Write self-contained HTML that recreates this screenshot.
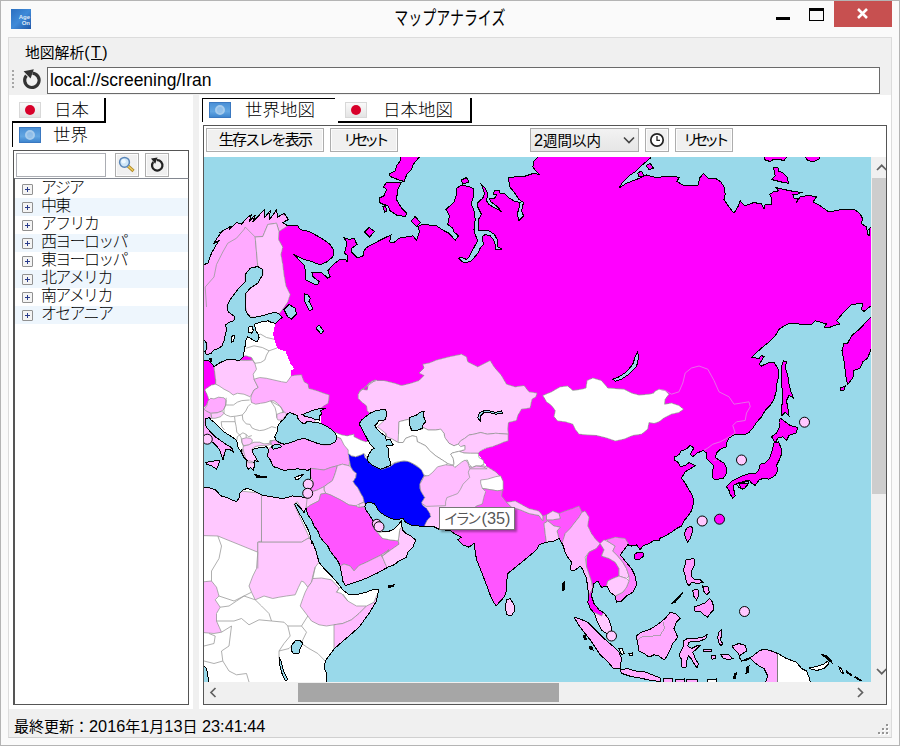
<!DOCTYPE html>
<html lang="ja"><head><meta charset="utf-8"><title>マップアナライズ</title>
<style>
*{box-sizing:border-box;margin:0;padding:0}
html,body{width:900px;height:746px;overflow:hidden;background:#fafafa}
body{position:relative;font-family:"Liberation Sans","Noto Sans CJK JP",sans-serif;font-size:14px;color:#000}
.abs{position:absolute}
#win{left:0;top:0;width:900px;height:746px;border:1px solid #b4b4b4;background:#fafafa}
#client{left:8px;top:37px;width:884px;height:701px;background:#f0f0f0;border:1px solid #dcdcdc;border-bottom-color:#d0d0d0}
#title{left:350px;top:6px;width:200px;text-align:center;font-size:19px;line-height:26px;color:#000;transform:scaleX(.735);transform-origin:99.5px 0}
.btn{border:1px solid #adadad;background:#f0f0f0;box-shadow:inset 0 0 0 1px #fcfcfc;text-align:center;white-space:nowrap;overflow:hidden}
.white{background:#fff}
.L{font-size:16.3px}
.ln{background:#000}
.tree div{position:absolute;left:0;width:173px;height:18px}
.tree .alt{background:#eef6fd}
.tree span{font-weight:300;position:absolute;left:26px;top:-2px;font-size:16px;line-height:20px;white-space:nowrap;letter-spacing:-1.7px}
.tree i{position:absolute;left:7px;top:4px;width:11px;height:11px;border:1px solid #919191;border-radius:1px;background:#f4f4f4}
.tree i:before{content:"";position:absolute;left:2px;top:4px;width:5px;height:1px;background:#2a3c8c}
.tree i:after{content:"";position:absolute;left:4px;top:2px;width:1px;height:5px;background:#2a3c8c}
</style></head><body>
<div id="win" class="abs"></div>
<div class="abs" style="left:11px;top:9px;width:20px;height:20px;background:linear-gradient(135deg,#2a6fc0,#3f8ad8 50%,#1f57a8);color:#dfeaf8;font-size:6px;line-height:6px;text-align:right;padding:5px 1px 0 0;font-weight:bold">Age<br>On</div>
<div id="title" class="abs">マップアナライズ</div>
<!-- caption buttons -->
<div class="abs ln" style="left:776px;top:17px;width:14px;height:3px"></div>
<div class="abs" style="left:809px;top:8px;width:15px;height:13px;border:1px solid #000;border-top-width:3px"></div>
<div class="abs" style="left:834px;top:1px;width:58px;height:26px;background:#c75050"></div>
<svg class="abs" style="left:834px;top:1px" width="58" height="26"><path d="M24 8 L33 17 M33 8 L24 17" stroke="#fff" stroke-width="2.6" fill="none"/></svg>
<div id="client" class="abs"></div>
<!-- menu -->
<div class="abs" style="left:25px;top:43px;font-size:14.8px;line-height:20px;white-space:nowrap">地図解析<span style="font-size:16px;letter-spacing:1.5px">(<u>T</u>)</span></div>
<!-- toolbar -->
<div class="abs" style="left:12px;top:70px;width:2px;height:18px;background:repeating-linear-gradient(#a6a6a6 0 2px,transparent 2px 4px)"></div>
<svg class="abs" style="left:21px;top:67px" width="22" height="25" viewBox="0 0 22 25"><path d="M5.4 8.6 A7.2 7.2 0 1 0 11.5 6.1" fill="none" stroke="#333" stroke-width="3.2"/><path d="M2.6 4.2 L12.8 2.2 L9.6 11.6 Z" fill="#333"/></svg>
<div class="abs white" style="left:47px;top:67px;width:833px;height:27px;border:1px solid #6a6a6a"></div>
<div class="abs" style="left:50px;top:69px;font-size:17.5px;line-height:22px;white-space:nowrap">local://screening/Iran</div>
<!-- white work area -->
<div class="abs white" style="left:9px;top:95px;width:184px;height:614px"></div>
<div class="abs white" style="left:199px;top:95px;width:692px;height:614px"></div>

<!-- left tabs -->
<div class="abs ln" style="left:104px;top:98px;width:2px;height:25px"></div>
<div class="abs ln" style="left:12px;top:121px;width:94px;height:2px"></div>
<div class="abs ln" style="left:12px;top:122px;width:1px;height:25px"></div>
<div class="abs" style="left:19px;top:102px;width:22px;height:16px;background:linear-gradient(#fafafa,#e4e4e4);border:1px solid #d8d8d8"><div class="abs" style="left:5px;top:2px;width:10px;height:10px;border-radius:5px;background:#d8002a"></div></div>
<div class="abs" style="left:54px;top:98px;font-size:17.5px;line-height:24px;white-space:nowrap;font-weight:300">日本</div>
<div class="abs" style="left:19px;top:127px;width:22px;height:16px;background:linear-gradient(#4a90d6,#62a6e2 60%,#3f86cf);border:1px solid #3a78c0"><div class="abs" style="left:5px;top:2px;width:10px;height:10px;border-radius:5px;border:2px solid #b4d4f0;background:rgba(255,255,255,.38);opacity:.85"></div></div>
<div class="abs" style="left:53px;top:123px;font-size:17.5px;line-height:24px;white-space:nowrap;font-weight:300">世界</div>
<!-- left panel -->
<div class="abs" style="left:13px;top:150px;width:176px;height:555px;border:1px solid #555"></div>
<div class="abs white" style="left:16px;top:153px;width:90px;height:24px;border:1px solid #abadb3"></div>
<div class="abs btn" style="left:115px;top:153px;width:24px;height:24px"></div>
<svg class="abs" style="left:115px;top:153px" width="24" height="24" viewBox="0 0 24 24"><line x1="13" y1="13" x2="18.5" y2="18" stroke="#b08a28" stroke-width="3.2"/><line x1="13" y1="13" x2="18" y2="17.6" stroke="#f2d060" stroke-width="1.4"/><circle cx="9.5" cy="9.3" r="4.9" fill="#cfe6f7" stroke="#5a86b8" stroke-width="1.5"/><circle cx="8.6" cy="8.2" r="2.2" fill="#eef8ff"/></svg>
<div class="abs btn" style="left:145px;top:153px;width:24px;height:24px"></div>
<svg class="abs" style="left:145px;top:153px" width="24" height="24" viewBox="0 0 24 24"><path d="M8.3 9.0 A5.2 5.2 0 1 0 12 7.2" fill="none" stroke="#222" stroke-width="2.2"/><path d="M6 5.6 L12.6 4.4 L10.2 10.8 Z" fill="#222"/></svg>
<div class="abs white tree" style="left:14px;top:178px;width:175px;height:527px;border:1px solid #555;border-top-color:#828790">
<div style="top:1px"><i></i><span>アジア</span></div>
<div class="alt" style="top:19px"><i></i><span>中東</span></div>
<div style="top:37px"><i></i><span>アフリカ</span></div>
<div class="alt" style="top:55px"><i></i><span>西ヨーロッパ</span></div>
<div style="top:73px"><i></i><span>東ヨーロッパ</span></div>
<div class="alt" style="top:91px"><i></i><span>北アメリカ</span></div>
<div style="top:109px"><i></i><span>南アメリカ</span></div>
<div class="alt" style="top:127px"><i></i><span>オセアニア</span></div>
</div>

<!-- right tabs -->
<div class="abs ln" style="left:202px;top:98px;width:1px;height:24px"></div>
<div class="abs ln" style="left:202px;top:98px;width:133px;height:1px"></div>
<div class="abs" style="left:209px;top:102px;width:22px;height:16px;background:linear-gradient(#4a90d6,#62a6e2 60%,#3f86cf);border:1px solid #3a78c0"><div class="abs" style="left:5px;top:2px;width:10px;height:10px;border-radius:5px;border:2px solid #b4d4f0;background:rgba(255,255,255,.38);opacity:.85"></div></div>
<div class="abs" style="left:245px;top:98px;font-size:17.5px;line-height:24px;white-space:nowrap;font-weight:300">世界地図</div>
<div class="abs ln" style="left:338px;top:121px;width:134px;height:2px"></div>
<div class="abs ln" style="left:470px;top:98px;width:2px;height:25px"></div>
<div class="abs" style="left:345px;top:102px;width:22px;height:16px;background:linear-gradient(#fafafa,#e4e4e4);border:1px solid #d8d8d8"><div class="abs" style="left:5px;top:2px;width:10px;height:10px;border-radius:5px;background:#d8002a"></div></div>
<div class="abs" style="left:383px;top:98px;font-size:17.5px;line-height:24px;white-space:nowrap;font-weight:300">日本地図</div>
<!-- right panel -->
<div class="abs" style="left:203px;top:125px;width:684px;height:580px;border:1px solid #555"></div>
<div class="abs btn" style="left:206px;top:128px;width:118px;height:24px;font-size:15px;line-height:22px;letter-spacing:-1.8px">生存スレを表示</div>
<div class="abs btn" style="left:330px;top:128px;width:68px;height:24px;font-size:15px;line-height:22px;letter-spacing:-4.6px">リセット</div>
<div class="abs" style="left:530px;top:128px;width:109px;height:24px;border:1px solid #acacac;background:linear-gradient(#f2f2f2,#e6e6e6);font-size:14.5px;line-height:22px;padding-left:3px;white-space:nowrap"><span class="L">2</span>週間以内</div>
<svg class="abs" style="left:622px;top:135px" width="14" height="10"><path d="M2 2.5 L7 7.5 L12 2.5" fill="none" stroke="#444" stroke-width="1.6"/></svg>
<div class="abs btn" style="left:645px;top:128px;width:24px;height:24px"></div>
<svg class="abs" style="left:645px;top:128px" width="24" height="24"><circle cx="12" cy="12" r="6.2" fill="#fff" stroke="#222" stroke-width="1.7"/><path d="M12 8 V12.3 H15" fill="none" stroke="#222" stroke-width="1.3"/></svg>
<div class="abs btn" style="left:675px;top:128px;width:58px;height:24px;font-size:15px;line-height:22px;letter-spacing:-4.6px">リセット</div>

<svg class="abs" style="left:204px;top:157px" width="667" height="525" viewBox="204 157 667 525" shape-rendering="crispEdges">
<defs><clipPath id="land"><polygon points="199.0,264.5 204.0,264.5 207.8,263.2 211.5,253.2 216.5,244.5 219.0,240.8 214.0,243.2 217.8,237.0 222.8,230.8 219.0,233.2 225.2,229.5 231.5,225.8 229.0,229.5 236.5,222.5 241.5,224.0 247.8,217.0 251.5,215.0 249.0,221.5 255.2,215.0 252.8,222.0 264.0,210.0 264.0,218.2 270.2,210.8 269.5,219.5 276.5,210.0 277.8,217.0 284.0,213.2 288.5,219.5 282.8,222.5 287.8,225.8 297.8,225.8 300.2,229.5 309.0,231.5 321.5,238.2 330.2,244.5 334.0,250.8 332.8,257.0 326.5,262.0 320.2,265.0 311.5,261.5 302.8,259.0 297.8,256.5 293.5,254.0 304.0,265.0 306.0,272.0 305.2,279.5 314.0,284.0 317.8,284.5 319.0,281.5 312.8,276.5 312.0,272.5 321.5,272.5 327.8,278.2 330.2,276.5 327.8,270.8 332.8,265.0 339.0,260.0 345.2,259.0 347.0,262.0 347.8,255.8 344.5,253.2 347.0,243.2 344.0,237.5 349.0,239.5 354.0,238.2 357.0,244.5 352.0,248.2 351.5,252.0 357.0,257.5 362.8,256.5 364.0,250.8 366.5,247.5 379.0,240.8 384.0,238.2 391.0,235.0 389.5,242.0 394.0,242.5 399.0,238.2 412.8,235.8 416.5,240.2 419.5,232.0 417.8,226.5 422.8,224.0 429.0,225.0 436.5,225.8 444.0,230.8 449.0,233.2 455.2,240.2 458.5,235.8 454.0,232.0 452.8,228.2 447.8,224.5 449.5,215.8 446.0,209.5 454.0,202.0 456.0,195.8 457.0,188.2 461.0,185.0 469.0,186.5 474.0,189.0 473.5,197.0 471.0,203.2 474.0,210.8 475.2,219.5 474.0,229.5 475.2,234.5 477.8,240.8 472.8,249.5 469.0,257.0 466.5,259.5 461.0,257.0 458.5,258.2 462.8,262.0 467.0,262.5 471.5,260.8 477.8,253.2 480.2,248.2 483.5,244.5 482.0,237.0 485.2,234.5 490.2,235.8 493.5,239.5 495.2,244.5 496.0,250.0 501.5,249.0 497.8,247.0 497.8,240.8 494.5,234.5 489.0,230.8 482.8,230.0 479.0,230.8 478.5,219.5 481.5,214.5 477.8,207.0 477.0,203.2 482.8,198.2 484.5,193.2 481.5,185.0 485.2,188.2 487.8,193.2 486.5,200.8 489.0,204.5 495.2,208.2 501.5,211.5 496.5,205.8 491.0,202.0 489.0,198.2 494.5,198.2 497.0,195.0 493.5,194.5 494.5,190.0 499.5,190.0 500.2,194.0 504.0,193.2 509.5,198.2 515.2,201.5 520.2,202.5 518.5,210.8 517.0,213.2 519.0,220.8 523.5,215.8 521.5,210.8 523.5,202.5 519.0,199.5 514.0,192.0 509.5,186.5 508.5,177.5 514.0,177.0 524.0,176.5 534.0,173.2 539.0,174.5 532.8,167.0 534.0,160.8 537.8,157.0 537.8,152.0 650.2,152.0 650.2,158.2 642.8,164.5 636.5,170.8 629.0,175.8 622.8,182.0 619.0,188.2 626.5,183.2 636.5,179.5 646.5,175.0 654.0,177.0 656.5,177.5 665.2,176.5 672.8,176.0 679.0,177.5 677.0,181.5 682.8,185.0 691.5,185.2 698.5,185.0 699.5,178.2 703.5,173.5 708.5,178.2 716.5,179.0 721.0,182.0 724.0,187.0 725.2,194.5 724.0,199.5 729.0,207.0 734.0,213.2 737.8,207.0 740.2,200.8 744.5,205.8 754.0,202.5 761.5,204.0 764.0,209.0 765.2,204.5 771.5,204.5 772.0,198.2 769.5,194.5 774.0,191.5 779.0,190.8 776.0,187.5 784.0,189.5 794.0,191.5 801.5,192.5 797.8,194.0 792.8,194.5 794.0,198.2 798.5,198.2 796.5,202.5 800.2,197.0 809.0,195.2 816.5,197.0 812.8,202.0 819.0,205.0 829.0,212.0 839.0,210.0 854.0,209.0 860.2,214.0 862.8,219.0 861.0,223.2 866.5,227.0 867.8,234.5 869.5,235.8 869.0,229.5 871.0,227.0 879.0,227.0 879.0,305.8 871.0,305.8 864.0,311.5 861.5,309.5 862.8,303.2 851.5,304.5 844.0,312.0 836.5,320.8 840.2,324.0 837.8,324.5 829.0,327.5 824.0,327.0 826.5,324.0 821.5,322.5 815.2,320.8 811.5,324.5 804.0,325.0 799.0,324.0 790.2,323.2 784.0,325.8 779.0,329.5 775.2,335.8 767.8,343.0 761.5,348.0 754.0,355.0 752.0,357.5 759.0,358.5 761.5,355.5 764.0,356.8 762.0,360.0 759.0,364.2 761.5,366.0 767.8,363.0 774.0,362.5 777.8,368.0 779.0,375.5 777.0,383.0 776.0,391.8 774.0,399.2 770.2,405.5 765.2,410.5 761.5,416.8 756.5,422.5 752.8,428.0 749.0,432.5 744.0,435.0 739.0,434.2 734.0,435.0 729.0,438.0 726.5,443.0 726.5,446.8 720.2,449.2 716.5,453.0 715.2,457.5 719.5,460.5 724.0,463.0 726.5,468.0 726.0,474.2 723.5,478.0 715.2,480.0 712.8,478.0 712.8,470.5 713.5,465.5 709.5,461.8 706.0,458.0 706.5,453.0 703.5,450.5 697.0,453.0 692.8,456.8 690.2,454.2 694.0,448.0 690.2,445.5 686.0,449.2 681.0,451.0 678.5,455.5 674.5,456.8 674.0,460.0 678.5,462.5 680.2,466.8 685.2,465.5 689.0,462.5 695.2,465.5 691.5,468.0 685.2,471.8 681.5,478.0 685.2,483.0 687.8,488.0 691.0,493.0 692.8,496.0 693.5,503.5 691.5,511.0 687.8,516.0 684.0,521.0 681.5,526.0 676.5,528.5 671.5,532.2 665.2,536.0 660.2,538.0 659.0,541.0 654.0,540.5 649.0,543.5 642.8,546.0 640.2,549.8 636.5,544.8 631.5,546.0 627.8,544.8 624.0,549.8 620.2,554.8 625.2,561.0 631.5,568.5 635.2,576.0 636.5,584.8 632.8,592.2 626.5,596.0 621.5,601.0 616.5,602.2 615.2,596.0 610.2,592.2 607.0,586.5 601.5,587.2 597.8,581.0 594.0,583.5 592.8,588.5 591.5,596.0 594.0,603.5 599.0,609.8 604.0,613.0 608.5,618.5 611.0,626.0 612.2,633.0 607.8,634.2 602.0,630.5 597.5,622.2 594.5,613.5 590.2,608.5 587.8,602.2 589.0,594.8 587.8,588.5 586.5,578.5 582.8,569.8 580.2,566.0 574.0,571.0 570.2,569.8 571.5,562.2 567.8,557.2 565.2,552.2 562.8,544.8 559.0,538.5 554.0,541.0 546.5,542.2 539.0,544.8 536.5,549.8 527.8,557.2 520.2,563.5 514.0,568.5 507.8,573.5 506.5,582.2 506.0,592.2 504.0,597.2 496.0,606.0 491.5,598.5 487.8,588.5 484.0,578.5 480.2,568.5 476.5,559.8 475.2,551.0 474.0,543.5 469.0,547.2 462.8,544.8 457.8,539.8 461.5,537.2 454.0,533.5 450.7,530.8 439.0,529.2 434.0,526.7 424.0,526.7 417.3,525.8 410.7,525.0 405.7,522.5 402.7,518.0 399.8,519.2 395.7,520.0 390.7,518.3 385.7,515.8 381.5,513.3 378.2,510.0 375.7,505.8 374.0,503.3 369.8,502.5 365.7,503.3 364.8,506.7 366.5,510.8 369.0,514.2 371.5,518.3 374.8,523.3 378.2,528.3 382.3,531.3 385.7,531.7 390.7,530.8 394.0,529.2 398.2,525.0 401.3,521.0 402.3,530.0 405.7,533.3 410.7,535.8 415.7,540.0 412.8,547.2 407.8,552.2 406.5,557.2 399.0,561.0 394.0,564.8 387.8,567.2 379.0,572.2 369.0,577.2 359.0,581.0 350.2,584.0 345.2,585.5 342.8,581.0 341.5,573.5 340.2,566.0 337.8,561.0 334.0,556.0 330.2,551.0 327.8,546.0 324.0,542.2 320.2,537.2 317.8,531.0 314.0,526.0 311.5,519.8 307.8,514.8 306.0,509.0 306.0,508.3 304.0,512.5 301.5,509.2 299.0,506.7 296.5,503.3 294.8,504.2 296.5,508.3 299.0,513.3 302.3,518.3 305.7,525.0 308.2,530.0 310.7,536.7 311.5,544.0 312.0,541.0 316.0,551.0 319.0,562.2 324.0,568.5 331.5,576.0 339.0,584.8 342.8,589.8 349.0,594.8 359.0,594.0 366.5,592.2 374.0,589.0 378.5,590.0 376.5,601.0 369.0,613.5 359.0,627.2 349.0,636.0 340.2,643.5 334.0,649.0 329.0,656.0 325.2,661.0 324.5,668.5 326.5,673.5 326.5,682.0 326.5,696.0 194.0,696.0"/></clipPath></defs>
<rect x="204" y="157" width="667" height="525" fill="#99d9ea"/>
<polygon points="199.0,264.5 204.0,264.5 207.8,263.2 211.5,253.2 216.5,244.5 219.0,240.8 214.0,243.2 217.8,237.0 222.8,230.8 219.0,233.2 225.2,229.5 231.5,225.8 229.0,229.5 236.5,222.5 241.5,224.0 247.8,217.0 251.5,215.0 249.0,221.5 255.2,215.0 252.8,222.0 264.0,210.0 264.0,218.2 270.2,210.8 269.5,219.5 276.5,210.0 277.8,217.0 284.0,213.2 288.5,219.5 282.8,222.5 287.8,225.8 297.8,225.8 300.2,229.5 309.0,231.5 321.5,238.2 330.2,244.5 334.0,250.8 332.8,257.0 326.5,262.0 320.2,265.0 311.5,261.5 302.8,259.0 297.8,256.5 293.5,254.0 304.0,265.0 306.0,272.0 305.2,279.5 314.0,284.0 317.8,284.5 319.0,281.5 312.8,276.5 312.0,272.5 321.5,272.5 327.8,278.2 330.2,276.5 327.8,270.8 332.8,265.0 339.0,260.0 345.2,259.0 347.0,262.0 347.8,255.8 344.5,253.2 347.0,243.2 344.0,237.5 349.0,239.5 354.0,238.2 357.0,244.5 352.0,248.2 351.5,252.0 357.0,257.5 362.8,256.5 364.0,250.8 366.5,247.5 379.0,240.8 384.0,238.2 391.0,235.0 389.5,242.0 394.0,242.5 399.0,238.2 412.8,235.8 416.5,240.2 419.5,232.0 417.8,226.5 422.8,224.0 429.0,225.0 436.5,225.8 444.0,230.8 449.0,233.2 455.2,240.2 458.5,235.8 454.0,232.0 452.8,228.2 447.8,224.5 449.5,215.8 446.0,209.5 454.0,202.0 456.0,195.8 457.0,188.2 461.0,185.0 469.0,186.5 474.0,189.0 473.5,197.0 471.0,203.2 474.0,210.8 475.2,219.5 474.0,229.5 475.2,234.5 477.8,240.8 472.8,249.5 469.0,257.0 466.5,259.5 461.0,257.0 458.5,258.2 462.8,262.0 467.0,262.5 471.5,260.8 477.8,253.2 480.2,248.2 483.5,244.5 482.0,237.0 485.2,234.5 490.2,235.8 493.5,239.5 495.2,244.5 496.0,250.0 501.5,249.0 497.8,247.0 497.8,240.8 494.5,234.5 489.0,230.8 482.8,230.0 479.0,230.8 478.5,219.5 481.5,214.5 477.8,207.0 477.0,203.2 482.8,198.2 484.5,193.2 481.5,185.0 485.2,188.2 487.8,193.2 486.5,200.8 489.0,204.5 495.2,208.2 501.5,211.5 496.5,205.8 491.0,202.0 489.0,198.2 494.5,198.2 497.0,195.0 493.5,194.5 494.5,190.0 499.5,190.0 500.2,194.0 504.0,193.2 509.5,198.2 515.2,201.5 520.2,202.5 518.5,210.8 517.0,213.2 519.0,220.8 523.5,215.8 521.5,210.8 523.5,202.5 519.0,199.5 514.0,192.0 509.5,186.5 508.5,177.5 514.0,177.0 524.0,176.5 534.0,173.2 539.0,174.5 532.8,167.0 534.0,160.8 537.8,157.0 537.8,152.0 650.2,152.0 650.2,158.2 642.8,164.5 636.5,170.8 629.0,175.8 622.8,182.0 619.0,188.2 626.5,183.2 636.5,179.5 646.5,175.0 654.0,177.0 656.5,177.5 665.2,176.5 672.8,176.0 679.0,177.5 677.0,181.5 682.8,185.0 691.5,185.2 698.5,185.0 699.5,178.2 703.5,173.5 708.5,178.2 716.5,179.0 721.0,182.0 724.0,187.0 725.2,194.5 724.0,199.5 729.0,207.0 734.0,213.2 737.8,207.0 740.2,200.8 744.5,205.8 754.0,202.5 761.5,204.0 764.0,209.0 765.2,204.5 771.5,204.5 772.0,198.2 769.5,194.5 774.0,191.5 779.0,190.8 776.0,187.5 784.0,189.5 794.0,191.5 801.5,192.5 797.8,194.0 792.8,194.5 794.0,198.2 798.5,198.2 796.5,202.5 800.2,197.0 809.0,195.2 816.5,197.0 812.8,202.0 819.0,205.0 829.0,212.0 839.0,210.0 854.0,209.0 860.2,214.0 862.8,219.0 861.0,223.2 866.5,227.0 867.8,234.5 869.5,235.8 869.0,229.5 871.0,227.0 879.0,227.0 879.0,305.8 871.0,305.8 864.0,311.5 861.5,309.5 862.8,303.2 851.5,304.5 844.0,312.0 836.5,320.8 840.2,324.0 837.8,324.5 829.0,327.5 824.0,327.0 826.5,324.0 821.5,322.5 815.2,320.8 811.5,324.5 804.0,325.0 799.0,324.0 790.2,323.2 784.0,325.8 779.0,329.5 775.2,335.8 767.8,343.0 761.5,348.0 754.0,355.0 752.0,357.5 759.0,358.5 761.5,355.5 764.0,356.8 762.0,360.0 759.0,364.2 761.5,366.0 767.8,363.0 774.0,362.5 777.8,368.0 779.0,375.5 777.0,383.0 776.0,391.8 774.0,399.2 770.2,405.5 765.2,410.5 761.5,416.8 756.5,422.5 752.8,428.0 749.0,432.5 744.0,435.0 739.0,434.2 734.0,435.0 729.0,438.0 726.5,443.0 726.5,446.8 720.2,449.2 716.5,453.0 715.2,457.5 719.5,460.5 724.0,463.0 726.5,468.0 726.0,474.2 723.5,478.0 715.2,480.0 712.8,478.0 712.8,470.5 713.5,465.5 709.5,461.8 706.0,458.0 706.5,453.0 703.5,450.5 697.0,453.0 692.8,456.8 690.2,454.2 694.0,448.0 690.2,445.5 686.0,449.2 681.0,451.0 678.5,455.5 674.5,456.8 674.0,460.0 678.5,462.5 680.2,466.8 685.2,465.5 689.0,462.5 695.2,465.5 691.5,468.0 685.2,471.8 681.5,478.0 685.2,483.0 687.8,488.0 691.0,493.0 692.8,496.0 693.5,503.5 691.5,511.0 687.8,516.0 684.0,521.0 681.5,526.0 676.5,528.5 671.5,532.2 665.2,536.0 660.2,538.0 659.0,541.0 654.0,540.5 649.0,543.5 642.8,546.0 640.2,549.8 636.5,544.8 631.5,546.0 627.8,544.8 624.0,549.8 620.2,554.8 625.2,561.0 631.5,568.5 635.2,576.0 636.5,584.8 632.8,592.2 626.5,596.0 621.5,601.0 616.5,602.2 615.2,596.0 610.2,592.2 607.0,586.5 601.5,587.2 597.8,581.0 594.0,583.5 592.8,588.5 591.5,596.0 594.0,603.5 599.0,609.8 604.0,613.0 608.5,618.5 611.0,626.0 612.2,633.0 607.8,634.2 602.0,630.5 597.5,622.2 594.5,613.5 590.2,608.5 587.8,602.2 589.0,594.8 587.8,588.5 586.5,578.5 582.8,569.8 580.2,566.0 574.0,571.0 570.2,569.8 571.5,562.2 567.8,557.2 565.2,552.2 562.8,544.8 559.0,538.5 554.0,541.0 546.5,542.2 539.0,544.8 536.5,549.8 527.8,557.2 520.2,563.5 514.0,568.5 507.8,573.5 506.5,582.2 506.0,592.2 504.0,597.2 496.0,606.0 491.5,598.5 487.8,588.5 484.0,578.5 480.2,568.5 476.5,559.8 475.2,551.0 474.0,543.5 469.0,547.2 462.8,544.8 457.8,539.8 461.5,537.2 454.0,533.5 450.7,530.8 439.0,529.2 434.0,526.7 424.0,526.7 417.3,525.8 410.7,525.0 405.7,522.5 402.7,518.0 399.8,519.2 395.7,520.0 390.7,518.3 385.7,515.8 381.5,513.3 378.2,510.0 375.7,505.8 374.0,503.3 369.8,502.5 365.7,503.3 364.8,506.7 366.5,510.8 369.0,514.2 371.5,518.3 374.8,523.3 378.2,528.3 382.3,531.3 385.7,531.7 390.7,530.8 394.0,529.2 398.2,525.0 401.3,521.0 402.3,530.0 405.7,533.3 410.7,535.8 415.7,540.0 412.8,547.2 407.8,552.2 406.5,557.2 399.0,561.0 394.0,564.8 387.8,567.2 379.0,572.2 369.0,577.2 359.0,581.0 350.2,584.0 345.2,585.5 342.8,581.0 341.5,573.5 340.2,566.0 337.8,561.0 334.0,556.0 330.2,551.0 327.8,546.0 324.0,542.2 320.2,537.2 317.8,531.0 314.0,526.0 311.5,519.8 307.8,514.8 306.0,509.0 306.0,508.3 304.0,512.5 301.5,509.2 299.0,506.7 296.5,503.3 294.8,504.2 296.5,508.3 299.0,513.3 302.3,518.3 305.7,525.0 308.2,530.0 310.7,536.7 311.5,544.0 312.0,541.0 316.0,551.0 319.0,562.2 324.0,568.5 331.5,576.0 339.0,584.8 342.8,589.8 349.0,594.8 359.0,594.0 366.5,592.2 374.0,589.0 378.5,590.0 376.5,601.0 369.0,613.5 359.0,627.2 349.0,636.0 340.2,643.5 334.0,649.0 329.0,656.0 325.2,661.0 324.5,668.5 326.5,673.5 326.5,682.0 326.5,696.0 194.0,696.0" fill="#fff"/>
<g clip-path="url(#land)" stroke="#9a9a9a" stroke-width="0.8" stroke-linejoin="round">
<polygon points="290.2,217.0 287.8,225.8 279.0,231.5 278.5,239.5 282.8,247.0 281.0,254.5 282.8,264.5 284.0,274.5 286.0,285.8 290.2,294.5 287.8,302.0 283.5,308.2 279.0,314.0 282.3,317.5 279.8,319.2 275.7,323.3 274.0,328.3 273.2,334.2 274.0,339.2 275.7,343.3 277.0,348.0 281.5,350.0 285.7,351.3 288.2,358.3 290.7,364.2 294.8,369.2 290.7,370.0 291.5,375.8 297.3,375.0 301.5,374.7 304.0,381.7 308.2,384.2 308.7,388.3 317.3,390.8 324.0,393.3 329.3,395.0 328.2,403.3 324.0,405.8 320.7,408.3 320.7,418.3 320.7,425.0 332.3,430.8 337.3,433.3 342.3,435.0 347.3,435.8 354.0,434.2 354.0,436.7 360.7,440.0 365.7,441.7 369.8,440.8 369.8,413.3 367.3,410.8 366.5,405.8 362.3,402.5 358.2,398.3 358.2,394.2 361.5,389.2 367.3,390.0 368.2,384.2 372.3,380.8 375.7,380.0 376.5,380.5 384.0,380.5 394.0,383.0 401.5,385.5 411.5,383.0 419.0,380.5 424.0,375.5 419.0,373.0 424.0,368.0 422.8,364.2 429.0,363.0 429.0,363.0 436.5,360.0 449.0,356.8 461.5,354.2 466.5,356.8 467.8,361.8 477.8,366.8 490.2,360.5 494.0,366.8 501.5,375.5 506.5,384.2 515.2,386.8 524.0,385.5 529.0,391.8 537.0,393.0 536.0,396.8 532.0,399.2 530.2,408.0 521.5,409.2 517.8,415.5 516.5,420.5 508.5,422.5 507.8,429.2 508.5,434.2 501.5,439.2 494.0,443.0 486.5,448.0 477.8,453.0 480.2,456.8 484.0,461.8 487.8,468.0 495.2,473.0 500.2,478.0 502.0,483.0 502.8,489.2 501.5,496.0 506.5,502.2 515.2,501.0 529.0,508.5 539.0,511.0 542.8,516.0 546.5,514.8 552.8,511.0 559.0,513.5 565.2,511.0 572.8,508.5 579.0,506.0 582.0,512.2 585.2,511.0 589.0,517.2 587.8,526.0 591.5,533.5 596.0,539.8 600.2,543.5 604.0,539.8 606.5,539.8 615.2,537.2 625.2,538.5 627.8,544.8 629.0,553.0 654.0,553.0 900.0,560.0 900.0,100.0 150.0,100.0 150.0,215.0" fill="#ff00ff" stroke="none"/>
<polygon points="468.3,466.8 483.1,465.7 488.2,467.3 496.2,472.2 501.2,477.5 497.8,480.2 489.8,485.6 489.8,493.6 484.4,505.7 476.5,506.0 466.5,516.0 456.5,526.0 450.2,531.0 444.2,536.5 417.4,536.5 417.4,500.3 444.2,493.6" fill="#ffc8ff"/>
<polygon points="199.0,360.0 204.0,360.0 209.0,360.8 212.3,364.2 214.0,366.7 214.8,373.3 215.7,380.0 215.7,384.2 211.5,385.0 206.5,388.3 204.8,390.0 207.3,395.0 209.0,400.0 206.5,405.0 204.0,407.5 199.0,407.5" fill="#ff00ff"/>
<polygon points="199.0,264.5 207.8,260.8 214.0,239.5 231.5,223.2 264.0,207.0 289.0,217.0 287.8,225.8 279.0,231.5 276.5,223.2 267.8,224.5 262.8,236.5 255.2,237.0 256.5,252.0 257.8,266.5 250.2,268.2 245.2,274.5 245.2,282.0 237.8,289.5 230.2,299.5 227.0,305.8 227.8,310.0 227.3,310.0 229.0,312.5 234.8,316.7 233.7,320.8 229.0,322.5 225.7,324.7 226.5,330.0 225.3,335.0 224.0,340.8 222.0,345.8 218.2,348.7 214.0,350.0 210.7,353.7 206.5,354.7 204.8,351.7 207.0,348.3 206.5,343.3 204.0,339.7 199.0,339.7" fill="#ffaaff"/>
<polygon points="255.2,237.0 262.8,236.5 267.8,224.5 276.5,223.2 279.0,231.5 278.5,239.5 282.8,247.0 281.0,254.5 282.8,264.5 284.0,274.5 286.0,285.8 290.2,294.5 287.8,302.0 283.5,308.2 279.0,314.0 269.0,315.0 257.8,317.5 251.5,317.0 247.0,313.2 245.2,305.8 246.0,293.2 250.2,288.2 257.8,283.2 262.8,274.5 262.8,269.5 257.8,266.5 256.5,252.0" fill="#ffc8ff"/>
<polygon points="214.0,366.7 219.0,363.3 225.7,360.0 234.0,359.2 237.3,360.8 239.8,360.0 245.7,360.0 252.3,360.0 254.8,363.3 256.5,369.2 253.2,374.2 254.0,379.2 258.2,387.5 254.0,390.0 251.5,395.0 249.8,396.7 244.0,394.2 237.3,393.3 233.2,395.0 229.0,391.7 224.0,389.2 219.0,385.8 215.7,384.2 215.7,380.0 214.8,373.3" fill="#ffc8ff"/>
<polygon points="254.0,379.2 259.8,377.5 266.5,378.3 274.0,380.0 281.5,381.7 286.5,382.5 291.5,375.8 297.3,375.0 301.5,374.7 304.0,381.7 308.2,384.2 308.7,388.3 317.3,390.8 324.0,393.3 329.3,395.0 328.2,403.3 324.0,405.8 320.7,408.3 320.7,413.3 310.7,426.7 282.3,426.7 283.7,416.7 282.3,410.0 279.8,405.8 277.3,403.3 274.0,400.8 270.7,400.8 265.7,402.5 260.7,403.3 255.7,404.2 251.5,402.5 250.7,398.3 251.5,395.0 254.0,390.0 258.2,387.5" fill="#ffb0ff"/>
<polygon points="276.8,414.4 280.7,412.8 284.6,412.2 286.8,413.9 284.0,417.8 281.8,420.0 277.9,420.0 276.8,417.8" fill="#ffc8ff"/>
<polygon points="200.7,409.4 204.0,409.4 206.8,405.6 207.9,401.1 210.7,398.3 214.0,398.9 218.4,397.2 224.0,397.8 226.2,400.6 225.7,405.0 224.0,408.9 221.8,411.1 217.3,412.8 210.7,413.3 206.2,411.1" fill="#ffaaff"/>
<polygon points="210.7,413.3 217.3,412.8 221.8,411.1 224.0,413.3 220.7,416.7 215.1,418.3 211.8,418.3" fill="#ffc8ff"/>
<polygon points="200.7,409.1 204.0,409.1 206.2,411.1 210.7,413.3 211.8,418.3 209.6,418.3 206.2,418.9 205.1,422.2 206.2,426.7 210.7,432.2 215.1,436.7 220.7,440.6 226.2,444.4 231.8,447.8 233.1,451.7 229.6,449.4 225.7,449.4 224.6,453.3 223.4,457.8 222.3,464.4 200.7,464.4" fill="#ffaaff"/>
<polygon points="241.8,438.9 246.2,437.8 250.7,438.3 252.3,440.0 251.8,443.3 248.4,445.0 243.4,445.6 241.8,442.2" fill="#ffc8ff"/>
<polygon points="243.4,446.1 248.4,445.0 251.8,443.3 254.0,442.2 259.6,442.2 264.0,443.9 269.6,443.3 270.1,440.6 272.9,440.6 270.7,444.4 266.2,445.6 259.6,445.6 255.1,446.7 251.8,449.4 253.4,453.3 256.2,457.8 257.3,462.7 248.4,462.7 245.1,460.0 242.9,456.7 241.2,452.2 242.9,448.9 246.5,461.7 249.8,460.8 254.0,462.5 254.8,465.0 253.2,470.0 250.7,467.5 248.2,469.2 246.5,465.8 244.0,457.5 242.0,453.3" fill="#ffc8ff"/>
<polygon points="270.1,440.6 272.9,440.6 276.2,440.0 279.6,442.2 284.0,443.9 277.3,446.7 272.9,446.7 270.7,444.4" fill="#ff9cff"/>
<polygon points="268.2,449.2 272.3,445.8 270.7,441.7 274.0,440.0 279.0,442.5 284.0,444.2 290.7,442.5 297.3,440.0 304.0,438.3 310.7,440.8 317.3,443.3 324.0,445.0 330.7,444.7 336.5,436.7 340.7,438.3 345.7,445.0 349.0,450.8 350.7,455.0 349.0,465.8 342.3,464.2 337.3,465.8 330.7,467.5 324.0,470.0 317.3,469.2 310.7,468.3 310.7,471.7 307.3,470.8 304.0,469.2 300.7,470.0 297.3,468.3 294.0,470.0 289.0,469.2 285.7,470.8 280.7,469.2 276.5,467.5 273.2,466.7 271.5,462.5 269.8,459.2 267.3,455.8 268.2,452.5" fill="#ff9cff"/>
<polygon points="310.7,468.3 317.3,469.2 324.0,470.0 330.7,467.5 337.3,465.8 335.7,471.7 334.0,476.7 332.3,480.8 327.3,484.2 324.0,486.7 317.3,490.0 312.3,491.7 310.7,490.0 312.3,486.7 313.2,481.7 310.7,476.7 310.3,471.7" fill="#ff80ff"/>
<polygon points="337.3,465.8 342.3,464.2 349.0,465.8 350.7,466.7 353.2,470.8 356.5,473.3 355.7,477.5 353.2,481.7 354.8,484.2 358.2,488.3 360.7,493.3 363.2,497.5 364.0,501.7 363.2,502.5 359.0,504.2 355.7,505.8 349.0,505.0 340.7,500.0 334.0,496.7 330.7,495.0 325.7,493.3 324.0,490.0 324.0,486.7 327.3,484.2 332.3,480.8 334.0,476.7 335.7,471.7" fill="#ffc8ff"/>
<polygon points="359.0,504.2 363.2,502.5 365.7,503.3 364.8,506.7 364.0,506.7 359.0,507.5" fill="#ffc8ff"/>
<polygon points="304.8,498.0 307.3,493.3 312.3,491.7 317.3,490.0 324.0,486.7 324.0,490.0 325.7,493.3 320.7,494.2 319.0,500.8 314.0,503.3 310.7,505.0 306.0,508.3 305.3,503.3" fill="#ffc8ff"/>
<polygon points="306.0,508.3 310.7,505.0 314.0,503.3 319.0,500.8 320.7,494.2 325.7,493.3 330.7,495.0 334.0,496.7 340.7,500.0 349.0,505.0 355.7,505.8 359.0,507.5 364.0,506.7 366.5,510.8 369.0,514.2 371.5,518.3 374.8,523.3 373.2,526.7 375.7,530.8 378.2,533.3 382.3,538.3 390.7,540.0 398.2,540.8 399.0,544.2 390.7,550.0 381.5,556.7 389.0,549.8 381.5,554.8 374.0,558.5 366.5,562.2 359.0,565.5 354.0,571.0 350.2,566.0 344.0,564.0 340.2,566.0 337.8,561.0 334.0,556.0 330.2,551.0 327.8,546.0 324.0,542.2 320.2,537.2 317.8,531.0 314.0,526.0 311.5,519.8 307.8,514.8 305.2,508.5" fill="#ff55ff"/>
<polygon points="340.2,566.0 344.0,564.0 350.2,566.0 354.0,571.0 359.0,565.5 366.5,562.2 374.0,558.5 381.5,554.8 385.2,563.5 387.8,567.2 379.0,574.8 369.0,579.8 359.0,583.5 350.2,586.5 344.0,587.2 341.5,581.0 341.0,573.5" fill="#ffaaff"/>
<polygon points="381.5,554.8 389.0,549.8 381.5,556.7 390.7,550.0 399.0,544.2 398.2,540.8 399.0,535.0 399.8,529.2 402.0,526.7 402.3,530.0 405.7,533.3 410.7,535.8 417.3,540.0 419.0,541.0 412.8,549.8 407.8,554.8 406.5,559.8 399.0,563.5 394.0,567.2 387.8,569.8 385.2,563.5" fill="#ffc8ff"/>
<polygon points="378.2,533.3 382.3,531.7 385.7,531.7 390.7,530.8 394.0,529.2 398.2,525.0 401.5,521.3 402.0,526.7 399.8,529.2 399.0,535.0 398.2,540.8 390.7,540.0 382.3,538.3" fill="#ffffff"/>
<polygon points="348.2,453.3 351.5,455.8 355.7,456.7 360.7,455.0 364.0,453.3 364.8,457.5 368.2,460.0 369.8,463.3 374.8,466.7 382.3,469.2 389.8,466.7 394.8,463.3 400.7,461.3 407.3,460.8 412.3,463.3 417.3,466.7 422.3,470.0 424.0,475.8 420.7,481.7 419.8,488.3 422.3,493.3 424.8,497.5 422.3,501.7 422.3,505.0 426.5,508.3 429.8,513.3 430.7,516.7 427.3,520.0 424.8,525.0 424.0,528.3 417.3,527.5 410.7,526.7 405.7,524.2 402.3,520.0 399.8,520.8 395.7,521.7 390.7,520.0 385.7,517.5 381.5,515.0 378.2,511.7 375.7,507.5 374.0,505.0 369.8,504.2 365.7,504.7 364.0,501.7 363.2,497.5 360.7,493.3 358.2,488.3 354.8,484.2 353.2,481.7 355.7,477.5 356.5,473.3 353.2,470.8 350.7,466.7 349.8,462.5 349.0,458.3" fill="#0000ff"/>
<polygon points="332.3,430.8 337.3,433.3 342.3,435.0 347.3,435.8 354.0,434.2 354.0,436.7 360.7,440.0 365.7,441.7 369.8,440.8 370.7,445.0 374.0,448.3 371.5,450.0 369.0,454.2 367.3,458.3 364.0,453.3 360.7,455.0 355.7,456.7 351.5,455.8 348.2,453.3 348.2,450.0 344.0,445.0 340.7,438.3 336.5,436.7" fill="#ffffff"/>
<polygon points="359.0,391.8 364.0,388.0 369.0,383.0 376.5,380.5 384.0,380.5 394.0,383.0 401.5,385.5 411.5,383.0 419.0,380.5 424.0,375.5 419.0,373.0 424.0,368.0 422.8,364.2 429.0,363.0 429.0,363.0 436.5,360.0 449.0,356.8 461.5,354.2 466.5,356.8 467.8,361.8 477.8,366.8 490.2,360.5 494.0,366.8 501.5,375.5 506.5,384.2 515.2,386.8 524.0,385.5 529.0,391.8 537.0,393.0 536.0,396.8 532.0,399.2 530.2,408.0 521.5,409.2 517.8,415.5 516.5,420.5 508.5,422.5 507.8,429.2 508.5,434.2 495.7,433.3 487.3,434.2 480.7,432.5 474.0,434.2 469.0,435.0 464.8,438.3 460.7,440.8 458.2,444.2 454.0,445.8 449.0,443.3 444.8,437.5 444.0,433.3 440.7,429.2 435.7,430.0 428.2,430.0 423.2,427.5 422.3,429.2 410.7,430.0 409.0,419.2 399.0,421.7 398.2,442.5 392.3,439.2 386.5,436.7 385.7,433.3 377.3,426.7 385.7,419.2 386.5,413.3 385.7,410.0 375.7,410.8 369.8,413.3 367.3,410.8 366.5,405.8 362.3,402.5 358.2,398.3 358.2,394.2 361.5,389.2 367.3,390.0 368.2,384.2 372.3,380.8 375.7,380.0" fill="#ffc8ff"/>
<polygon points="460.7,440.8 464.8,438.3 469.0,435.0 474.0,434.2 480.7,432.5 487.3,434.2 495.7,433.3 508.2,434.2 508.2,440.8 504.0,442.0 499.0,444.2 492.3,446.7 485.7,448.3 480.7,450.8 478.2,453.3 470.7,453.3 464.0,453.0 459.0,451.3 464.8,449.7 464.8,445.5 460.7,446.7 458.2,444.2" fill="#ffc8ff"/>
<polygon points="399.0,421.7 409.0,419.2 410.7,430.0 422.3,429.2 423.2,427.5 428.2,430.0 435.7,430.0 440.7,429.2 444.0,433.3 444.8,437.5 449.0,443.3 454.0,445.8 458.2,444.2 460.7,446.7 464.8,445.5 464.8,449.7 459.0,451.3 452.3,453.0 450.7,454.2 453.2,458.3 454.0,463.3 452.3,465.0 447.3,463.3 442.3,460.0 435.7,455.8 429.8,450.8 425.7,445.8 420.7,443.3 417.3,441.7 416.5,436.7 412.3,435.8 405.7,438.3 403.2,442.5 398.2,442.5" fill="#ffffff"/>
<polygon points="385.7,433.3 386.5,436.7 392.3,439.2 398.2,442.5 403.2,442.5 405.7,438.3 412.3,435.8 416.5,436.7 417.3,441.7 420.7,443.3 425.7,445.8 429.8,450.8 435.7,455.8 442.3,460.0 447.3,463.3 446.5,465.0 440.7,466.7 437.3,468.3 434.8,472.5 430.7,475.0 427.3,476.3 424.0,475.0 421.5,470.0 418.2,466.7 414.0,464.2 409.0,461.7 404.0,460.8 399.0,461.7 394.8,462.5 390.7,465.0 387.3,460.0 385.7,446.7" fill="#ffffff"/>
<polygon points="450.7,454.2 452.3,453.0 459.0,451.3 464.0,453.0 470.7,453.3 478.2,453.3 479.0,457.5 483.2,460.0 484.0,464.2 480.7,465.8 475.7,465.8 472.3,467.5 469.0,464.2 467.3,460.0 464.0,460.8 460.7,464.2 456.5,466.7 454.0,467.5 453.2,466.7 454.0,463.3 453.2,458.3" fill="#ffffff"/>
<polygon points="480.7,480.0 487.3,479.2 495.7,476.7 500.7,475.8 503.2,481.7 503.2,490.0 497.3,490.8 487.3,489.2 482.3,488.3 480.7,483.3" fill="#ffffff"/>
<polygon points="482.3,488.3 487.3,489.2 497.3,490.8 503.2,490.0 502.8,489.2 501.5,496.0 506.5,502.2 511.5,507.2 520.2,509.8 529.0,513.5 539.0,515.5 542.8,521.0 542.8,516.0 546.5,514.8 546.5,519.8 552.8,519.8 560.2,518.5 559.0,513.5 565.2,511.0 572.8,508.5 579.0,506.0 582.0,512.2 579.0,517.2 574.0,523.5 570.2,528.5 565.2,533.5 562.8,544.8 559.0,538.5 557.0,531.0 560.2,527.2 554.0,526.0 547.8,521.0 544.0,523.5 545.2,533.5 546.5,542.2 539.0,546.0 536.5,551.0 527.8,558.5 520.2,564.8 514.0,569.8 509.0,574.8 507.8,582.2 507.2,592.2 505.2,598.5 496.0,608.5 490.2,598.5 486.5,588.5 482.8,578.5 479.0,568.5 475.2,559.8 474.0,551.0 474.0,543.5 469.0,548.5 462.8,546.0 457.8,541.0 460.2,537.2 454.0,534.8 449.0,531.0 456.5,526.0 466.5,516.0 476.5,506.0 482.3,504.0 484.0,496.7 485.7,491.7" fill="#ff55ff"/>
<polygon points="506.5,502.2 515.2,501.0 529.0,508.5 539.0,511.0 542.8,516.0 542.8,521.0 539.0,515.5 529.0,513.5 520.2,509.8 511.5,507.2" fill="#ffc8ff"/>
<polygon points="546.5,514.8 552.8,511.0 559.0,513.5 560.2,518.5 552.8,519.8 546.5,519.8" fill="#ffc8ff"/>
<polygon points="544.0,523.5 547.8,521.0 554.0,526.0 560.2,527.2 557.0,531.0 559.0,538.5 555.2,542.2 546.5,543.5 545.2,533.5" fill="#ffc8ff"/>
<polygon points="565.2,533.5 570.2,528.5 574.0,523.5 579.0,517.2 582.0,512.2 585.2,511.0 589.0,517.2 587.8,526.0 591.5,533.5 596.0,539.8 600.2,543.5 596.5,548.5 589.0,552.2 585.2,557.2 586.5,566.0 589.0,573.5 591.5,581.0 592.8,588.5 589.0,594.8 585.2,591.0 584.0,578.5 581.5,571.0 579.0,567.2 574.0,572.2 569.0,571.0 570.2,562.2 566.5,557.2 564.0,552.2 561.5,544.8" fill="#ffb4ff"/>
<polygon points="586.5,557.2 589.0,552.2 596.5,548.5 600.2,543.5 604.0,549.8 601.5,556.0 609.0,558.5 615.2,562.2 619.0,568.5 619.0,576.0 612.8,578.5 607.8,581.0 606.5,587.2 601.5,588.5 597.8,582.2 594.0,584.8 592.8,588.5 591.5,596.0 594.0,603.5 599.0,609.8 604.0,613.5 601.5,616.0 595.2,613.5 589.0,609.8 586.5,602.2 589.0,594.8 592.8,588.5 591.5,581.0 589.0,573.5 586.5,566.0" fill="#ff00ff"/>
<polygon points="600.2,543.5 604.0,539.8 609.0,542.2 615.2,546.0 612.8,551.0 617.8,556.0 622.8,562.2 626.5,568.5 629.0,576.0 626.5,578.5 619.0,576.0 619.0,568.5 615.2,562.2 609.0,558.5 601.5,556.0 604.0,549.8" fill="#ffc8ff"/>
<polygon points="606.5,539.8 615.2,537.2 625.2,538.5 629.0,544.8 625.2,549.8 621.5,554.8 626.5,561.0 632.8,568.5 636.5,576.0 637.8,584.8 634.0,593.5 627.8,597.2 622.8,602.2 615.2,603.5 615.2,596.0 622.8,592.2 626.5,587.2 629.0,581.0 629.0,576.0 626.5,568.5 622.8,562.2 617.8,556.0 612.8,551.0 615.2,546.0 609.0,542.2" fill="#ff80ff"/>
<polygon points="607.8,581.0 612.8,578.5 619.0,576.0 626.5,578.5 629.0,581.0 626.5,587.2 622.8,592.2 615.2,596.0 609.0,593.5 606.0,587.2" fill="#ffc8ff"/>
<polygon points="594.0,612.2 601.5,616.0 604.0,612.2 610.2,618.5 612.8,626.0 614.0,634.8 607.8,636.0 600.2,631.0 596.0,622.2" fill="#ffc8ff"/>
<polygon points="199.0,486.7 262.3,493.3 261.5,544.0 261.5,541.0 257.8,542.2 257.8,552.2 217.8,536.0 199.0,535.5" fill="#ffc8ff"/>
<polygon points="261.5,493.3 307.3,496.7 306.0,508.3 304.0,513.3 297.3,501.7 294.0,504.2 312.3,544.0 314.0,533.5 307.8,538.5 301.5,542.2 261.5,542.2" fill="#ffc8ff"/>
<polygon points="257.8,542.2 301.5,542.2 307.8,538.5 314.0,538.5 316.0,551.0 319.0,562.2 315.2,567.2 312.8,576.0 311.5,582.2 307.8,587.2 304.0,582.2 301.5,581.0 298.5,587.2 295.2,594.8 286.5,596.0 279.0,597.2 272.8,598.5 264.0,596.0 255.2,599.8 251.5,592.2 249.0,586.0 252.8,576.0 256.5,568.5 257.8,552.2" fill="#ffc8ff"/>
<polygon points="312.8,578.5 321.5,578.0 331.5,579.8 339.0,588.0 336.5,592.2 341.5,593.5 347.8,601.0 356.5,606.0 366.5,606.0 359.0,613.5 351.5,619.8 342.8,623.5 334.0,624.8 326.5,626.0 319.0,624.8 311.5,621.0 307.8,616.0 304.0,611.0 300.2,606.0 302.8,598.5 305.2,592.2 307.8,587.2 311.5,582.2" fill="#ffc8ff"/>
<polygon points="334.0,624.8 342.8,623.5 351.5,619.8 359.0,613.5 366.5,606.0 374.0,602.2 376.5,596.0 381.5,588.5 379.0,603.5 369.0,616.0 359.0,629.8 349.0,638.5 340.2,646.0 334.0,651.0" fill="#ffbbff"/>
<polygon points="199.0,582.2 211.5,581.0 216.5,587.2 219.0,596.0 215.2,599.8 220.2,607.2 216.5,613.5 216.5,621.0 221.5,632.2 214.0,633.5 199.0,632.2" fill="#ffbbff"/>
<polygon points="542.8,395.5 551.5,391.8 560.2,386.8 567.8,386.0 572.8,390.5 581.5,389.2 586.0,388.0 587.0,380.5 592.8,378.0 601.5,380.5 607.8,388.0 615.2,388.5 624.0,389.2 631.5,393.0 639.0,395.0 649.0,394.2 654.0,393.0 654.0,391.8 659.0,389.2 665.2,390.5 669.0,394.2 665.2,399.2 664.5,404.2 671.5,403.0 679.0,405.5 683.5,409.2 679.0,412.5 671.5,414.2 664.0,418.0 659.0,421.8 654.0,423.5 649.0,422.5 647.8,429.2 641.5,434.2 632.8,435.5 624.0,439.2 615.2,441.0 606.5,438.0 596.5,435.5 587.8,435.0 579.0,434.2 575.2,429.2 572.8,424.2 565.2,421.8 557.8,421.0 554.0,416.8 555.2,410.5 551.5,405.5 546.5,401.8" fill="#ffffff"/>
<polygon points="239.8,360.0 243.2,356.7 245.7,355.8 251.5,357.5 252.3,360.0 245.7,360.3" fill="#ff00ff"/>
<polygon points="424.1,476.2 428.8,475.5 432.8,472.2 437.5,466.8 445.6,464.8 452.9,465.5 454.9,467.5 461.6,462.1 465.0,460.1 467.7,462.1 469.7,468.2 476.4,466.1 483.1,466.8 487.1,468.8 479.1,468.8 469.7,468.8 468.3,472.2 469.7,477.5 467.0,480.2 463.0,484.2 460.3,489.6 457.6,493.6 452.3,495.6 446.9,497.6 445.6,501.7 445.6,505.7 426.1,506.4 421.4,503.0 424.8,497.6 420.8,490.9 419.8,484.2 422.1,480.2" fill="#ffbcff"/>
<g fill="none">
<polyline points="245.7,348.3 254.0,345.8 262.3,347.5 269.0,350.8 277.0,348.0"/>
<polyline points="251.5,357.5 254.8,363.3"/>
<polyline points="257.3,335.0 260.7,334.2 266.5,337.5 274.0,339.2"/>
<polyline points="269.0,350.8 266.5,355.0 264.8,360.0 260.7,362.5 254.8,363.3"/>
<polyline points="226.2,397.8 225.7,405.0 224.0,408.9 224.0,413.3"/>
<polyline points="225.7,405.0 229.6,405.0 233.4,405.0 237.3,402.2 241.8,400.6 249.6,400.0"/>
<polyline points="224.0,413.3 226.2,415.0 230.7,416.7 236.2,416.1 242.3,415.0 245.7,411.1 247.9,406.7 250.7,403.9"/>
<polyline points="242.3,415.0 242.9,420.0 246.2,423.9 250.1,424.4 251.8,427.8 255.1,429.4 259.6,430.6 264.0,430.0 268.4,428.3 271.8,426.7 276.2,427.8"/>
<polyline points="234.6,416.7 235.1,421.7 236.2,426.7 236.8,432.2 239.6,435.0 242.9,432.8 246.2,434.4 248.4,436.7 251.8,435.6"/>
<polyline points="221.2,421.7 235.1,421.7"/>
<polyline points="221.2,421.7 221.8,426.7 224.6,430.0"/>
<polyline points="236.8,440.6 237.3,436.7 239.6,435.0 241.2,437.8 241.8,442.2 243.4,446.1"/>
<polyline points="246.2,434.4 246.2,437.8"/>
<polyline points="270.7,401.1 275.1,407.8 276.2,412.2 276.8,417.8"/>
<polyline points="270.7,401.1 280.7,406.7 284.0,412.2"/>
<polyline points="217.8,536.0 221.5,546.0 219.0,558.5 211.5,571.0 211.5,581.0"/>
<polyline points="257.8,552.2 257.8,568.5"/>
<polyline points="219.0,596.0 234.0,601.0 251.5,592.2"/>
<polyline points="255.2,599.8 261.5,606.0 269.0,613.5 271.5,621.0 284.0,622.2 287.8,626.0 301.5,626.0 307.8,616.0"/>
<polyline points="220.2,607.2 229.0,606.0 236.5,601.0 244.0,596.0 255.2,599.8"/>
<polyline points="216.5,621.0 234.0,621.0 241.5,618.5 249.0,624.8 259.0,619.8 271.5,621.0"/>
<polyline points="287.8,626.0 290.2,636.0 284.0,643.5 279.0,651.0 279.0,658.5"/>
<polyline points="301.5,626.0 306.5,632.2 302.8,639.8 301.5,643.5 309.0,648.5 317.8,653.5 325.2,661.0"/>
<polyline points="221.5,632.2 231.5,626.0 229.0,646.0 221.5,651.0 222.8,661.0 214.0,663.5 204.0,661.0"/>
<polyline points="279.0,651.0 289.0,648.5 291.5,646.0"/>
<polyline points="222.8,661.0 229.0,671.0 236.5,674.8 246.5,673.5 249.0,682.0"/>
<polyline points="312.8,578.5 315.2,567.2"/>
<polyline points="336.5,592.2 340.2,587.2 344.0,590.5"/>
<polyline points="342.8,594.0 347.8,601.0"/>
<polyline points="204.0,646.0 214.0,643.5 215.2,636.0 209.0,633.5"/>
<polyline points="206.5,307.0 205.2,287.0 214.0,277.0 216.5,264.5 222.8,252.0 227.8,243.2 236.5,238.2 244.0,229.5 245.2,227.0 255.2,237.0"/>
</g><g fill="none" stroke="#e08ae0">
<polyline points="659.0,389.2 665.2,390.5 671.5,394.2 679.0,391.8 682.8,383.0 685.2,373.0 691.5,368.0 699.0,366.0 707.8,369.2 714.0,380.5 719.0,391.8 729.0,396.8 734.0,404.2 741.5,403.0 749.0,401.8 750.2,406.8 746.5,413.0 745.2,420.5 736.5,421.8 732.8,425.5 735.2,433.0 731.5,435.5"/>
<polyline points="731.5,435.5 725.2,439.2 720.2,441.8 712.8,444.2 707.8,448.0 703.5,450.5"/>
<polyline points="713.5,460.5 719.5,459.2 724.0,462.5"/>
</g></g>
<g fill="#99d9ea" stroke="#000" stroke-width="1">
<polygon points="257.8,266.5 250.2,268.2 245.2,274.5 245.2,282.0 237.8,289.5 230.2,299.5 227.0,305.8 227.8,310.0 227.3,310.0 229.0,312.5 234.8,316.7 233.7,320.8 229.0,322.5 225.7,324.7 226.5,330.0 225.3,335.0 224.0,340.8 222.0,345.8 218.2,348.7 214.0,350.0 210.7,353.7 206.5,354.7 204.8,351.7 207.0,348.3 206.5,343.3 204.0,339.7 199.0,339.7 199.0,360.0 204.0,360.0 209.0,360.8 212.3,364.2 214.0,366.7 219.0,363.3 225.7,360.0 234.0,359.2 237.3,360.8 239.8,360.0 243.2,356.7 244.8,348.3 245.7,340.8 247.7,336.7 250.7,338.3 254.0,340.8 257.3,341.3 259.0,337.5 257.7,333.3 255.3,330.0 254.8,324.2 260.7,322.0 268.2,320.8 271.5,322.5 275.7,323.3 279.8,319.2 282.3,317.5 278.2,313.3 274.0,312.5 267.3,314.2 259.0,316.7 250.7,317.5 247.7,314.2 245.7,310.0 245.2,305.8 246.0,293.2 250.2,288.2 257.8,283.2 262.8,274.5 262.8,269.5"/>
<polygon points="199.0,488.0 204.0,488.0 209.0,487.5 215.7,490.0 220.7,495.8 227.3,497.5 232.3,500.0 236.5,501.7 239.0,498.3 239.8,493.3 243.2,490.0 247.3,488.3 252.3,490.0 257.3,492.5 262.3,495.0 270.7,496.7 277.3,497.5 282.3,498.7 287.3,497.5 292.3,495.8 297.3,496.7 302.3,497.0 304.8,498.0 306.5,493.3 308.2,488.3 309.3,483.3 310.3,476.7 310.7,468.3 307.3,470.8 304.0,469.2 300.7,470.0 297.3,468.3 294.0,470.0 289.0,469.2 285.7,470.8 280.7,469.2 276.5,467.5 273.2,466.7 271.5,462.5 269.8,459.2 267.3,455.8 268.2,452.5 268.2,449.2 266.5,446.7 261.5,447.5 255.7,448.3 252.3,450.0 253.2,453.3 255.7,457.5 258.2,461.7 254.8,460.8 254.0,462.5 254.8,465.0 253.2,470.0 250.7,467.5 248.2,469.2 246.5,465.8 246.5,461.7 247.3,460.8 244.0,457.5 242.0,453.3 241.5,449.2 241.2,452.2 238.4,447.8 237.3,444.4 236.8,440.6 234.0,438.3 230.7,436.1 226.2,433.3 222.3,430.6 219.6,427.8 216.2,423.9 213.4,421.7 211.2,420.0 209.6,417.8 205.7,418.3 205.1,422.2 206.2,426.7 210.7,432.2 215.1,436.7 220.7,440.6 226.2,444.4 231.8,447.8 233.1,451.7 229.6,449.4 225.7,449.4 224.6,453.3 223.4,457.8 223.2,460.0 221.5,455.8 219.8,450.0 215.7,445.0 210.7,440.8 205.7,436.7 204.0,435.0 199.0,435.0"/>
<polygon points="274.8,436.7 277.3,431.7 278.2,425.0 282.3,420.0 280.7,421.7 284.0,419.2 287.3,414.2 289.8,412.5 294.0,414.2 297.3,415.8 298.2,419.2 300.7,421.7 304.0,424.2 307.3,421.3 312.3,422.0 320.7,423.3 327.3,426.7 332.3,430.0 335.7,434.0 336.5,436.7 335.7,441.7 330.7,444.2 324.0,445.0 317.3,443.3 310.7,440.8 304.0,438.3 297.3,440.0 290.7,442.5 284.0,444.2 279.0,442.5 275.7,440.0"/>
<polygon points="302.3,414.7 307.3,412.5 314.0,410.0 320.7,408.3 325.7,408.3 320.7,410.8 321.5,414.2 319.0,416.7 319.0,420.0 314.8,419.2 310.7,417.5 305.7,416.7"/>
<polygon points="271.5,446.7 274.0,445.0 279.8,444.7 281.5,446.7 277.3,448.3 273.2,449.2"/>
<polygon points="359.0,424.2 361.5,420.0 365.7,416.7 369.8,413.3 375.7,410.8 382.3,409.7 385.7,410.0 386.5,413.3 385.7,419.2 382.3,420.8 379.0,420.0 377.3,423.3 374.8,425.8 377.3,429.2 380.7,432.5 384.8,435.8 386.5,440.0 389.8,439.2 391.5,441.7 393.2,445.0 386.5,445.8 389.0,450.0 388.2,455.8 389.8,460.0 390.7,465.0 389.8,465.8 380.7,469.2 372.3,465.0 368.2,461.7 367.3,458.3 369.0,454.2 371.5,450.0 374.0,448.3 370.7,445.0 368.2,440.8 365.7,435.8 363.2,431.7 361.5,427.5"/>
<polygon points="409.8,417.5 416.5,415.0 419.8,412.5 422.3,411.7 424.0,411.7 423.2,415.8 424.8,419.2 425.7,421.7 423.2,424.2 422.3,428.3 418.2,430.0 411.5,430.0 409.8,425.0"/>
<polygon points="477.7,417.5 479.8,412.5 484.0,410.8 489.0,410.8 495.7,412.5 501.5,410.8 502.3,413.3 495.7,414.2 489.0,412.5 484.0,412.5 480.7,415.8 480.3,421.3"/>
<polygon points="612.8,379.2 619.0,376.8 626.5,371.8 632.8,364.2 635.2,356.8 637.8,351.8 638.5,358.0 636.5,366.8 629.0,374.2 621.5,379.2 615.2,381.2"/>
<polygon points="284.0,309.5 289.0,304.5 295.2,308.2 296.5,314.0 291.5,319.0 287.8,317.0"/>
<polygon points="304.5,294.0 307.8,295.0 310.2,298.2 309.0,301.5 311.5,305.8 312.8,309.0 309.5,310.8 307.0,305.8 304.8,302.0"/>
<polygon points="316.0,328.2 319.0,325.0 323.5,330.8 321.0,334.0"/>
<polygon points="291.0,646.0 295.2,641.0 300.2,640.5 302.8,643.5 300.2,648.5 299.0,653.5 294.0,654.0 291.5,651.0"/>
<polygon points="279.5,658.5 281.5,662.2 282.8,668.5 285.2,674.8 287.8,679.8 285.2,680.5 282.0,673.5 280.2,667.2 279.0,662.2"/>
<polygon points="199.0,666.0 204.0,666.0 206.5,668.5 209.0,682.0 210.2,696.0 199.0,696.0"/>
</g>
<polygon points="199.0,264.5 204.0,264.5 207.8,263.2 211.5,253.2 216.5,244.5 219.0,240.8 214.0,243.2 217.8,237.0 222.8,230.8 219.0,233.2 225.2,229.5 231.5,225.8 229.0,229.5 236.5,222.5 241.5,224.0 247.8,217.0 251.5,215.0 249.0,221.5 255.2,215.0 252.8,222.0 264.0,210.0 264.0,218.2 270.2,210.8 269.5,219.5 276.5,210.0 277.8,217.0 284.0,213.2 288.5,219.5 282.8,222.5 287.8,225.8 297.8,225.8 300.2,229.5 309.0,231.5 321.5,238.2 330.2,244.5 334.0,250.8 332.8,257.0 326.5,262.0 320.2,265.0 311.5,261.5 302.8,259.0 297.8,256.5 293.5,254.0 304.0,265.0 306.0,272.0 305.2,279.5 314.0,284.0 317.8,284.5 319.0,281.5 312.8,276.5 312.0,272.5 321.5,272.5 327.8,278.2 330.2,276.5 327.8,270.8 332.8,265.0 339.0,260.0 345.2,259.0 347.0,262.0 347.8,255.8 344.5,253.2 347.0,243.2 344.0,237.5 349.0,239.5 354.0,238.2 357.0,244.5 352.0,248.2 351.5,252.0 357.0,257.5 362.8,256.5 364.0,250.8 366.5,247.5 379.0,240.8 384.0,238.2 391.0,235.0 389.5,242.0 394.0,242.5 399.0,238.2 412.8,235.8 416.5,240.2 419.5,232.0 417.8,226.5 422.8,224.0 429.0,225.0 436.5,225.8 444.0,230.8 449.0,233.2 455.2,240.2 458.5,235.8 454.0,232.0 452.8,228.2 447.8,224.5 449.5,215.8 446.0,209.5 454.0,202.0 456.0,195.8 457.0,188.2 461.0,185.0 469.0,186.5 474.0,189.0 473.5,197.0 471.0,203.2 474.0,210.8 475.2,219.5 474.0,229.5 475.2,234.5 477.8,240.8 472.8,249.5 469.0,257.0 466.5,259.5 461.0,257.0 458.5,258.2 462.8,262.0 467.0,262.5 471.5,260.8 477.8,253.2 480.2,248.2 483.5,244.5 482.0,237.0 485.2,234.5 490.2,235.8 493.5,239.5 495.2,244.5 496.0,250.0 501.5,249.0 497.8,247.0 497.8,240.8 494.5,234.5 489.0,230.8 482.8,230.0 479.0,230.8 478.5,219.5 481.5,214.5 477.8,207.0 477.0,203.2 482.8,198.2 484.5,193.2 481.5,185.0 485.2,188.2 487.8,193.2 486.5,200.8 489.0,204.5 495.2,208.2 501.5,211.5 496.5,205.8 491.0,202.0 489.0,198.2 494.5,198.2 497.0,195.0 493.5,194.5 494.5,190.0 499.5,190.0 500.2,194.0 504.0,193.2 509.5,198.2 515.2,201.5 520.2,202.5 518.5,210.8 517.0,213.2 519.0,220.8 523.5,215.8 521.5,210.8 523.5,202.5 519.0,199.5 514.0,192.0 509.5,186.5 508.5,177.5 514.0,177.0 524.0,176.5 534.0,173.2 539.0,174.5 532.8,167.0 534.0,160.8 537.8,157.0 537.8,152.0 650.2,152.0 650.2,158.2 642.8,164.5 636.5,170.8 629.0,175.8 622.8,182.0 619.0,188.2 626.5,183.2 636.5,179.5 646.5,175.0 654.0,177.0 656.5,177.5 665.2,176.5 672.8,176.0 679.0,177.5 677.0,181.5 682.8,185.0 691.5,185.2 698.5,185.0 699.5,178.2 703.5,173.5 708.5,178.2 716.5,179.0 721.0,182.0 724.0,187.0 725.2,194.5 724.0,199.5 729.0,207.0 734.0,213.2 737.8,207.0 740.2,200.8 744.5,205.8 754.0,202.5 761.5,204.0 764.0,209.0 765.2,204.5 771.5,204.5 772.0,198.2 769.5,194.5 774.0,191.5 779.0,190.8 776.0,187.5 784.0,189.5 794.0,191.5 801.5,192.5 797.8,194.0 792.8,194.5 794.0,198.2 798.5,198.2 796.5,202.5 800.2,197.0 809.0,195.2 816.5,197.0 812.8,202.0 819.0,205.0 829.0,212.0 839.0,210.0 854.0,209.0 860.2,214.0 862.8,219.0 861.0,223.2 866.5,227.0 867.8,234.5 869.5,235.8 869.0,229.5 871.0,227.0 879.0,227.0 879.0,305.8 871.0,305.8 864.0,311.5 861.5,309.5 862.8,303.2 851.5,304.5 844.0,312.0 836.5,320.8 840.2,324.0 837.8,324.5 829.0,327.5 824.0,327.0 826.5,324.0 821.5,322.5 815.2,320.8 811.5,324.5 804.0,325.0 799.0,324.0 790.2,323.2 784.0,325.8 779.0,329.5 775.2,335.8 767.8,343.0 761.5,348.0 754.0,355.0 752.0,357.5 759.0,358.5 761.5,355.5 764.0,356.8 762.0,360.0 759.0,364.2 761.5,366.0 767.8,363.0 774.0,362.5 777.8,368.0 779.0,375.5 777.0,383.0 776.0,391.8 774.0,399.2 770.2,405.5 765.2,410.5 761.5,416.8 756.5,422.5 752.8,428.0 749.0,432.5 744.0,435.0 739.0,434.2 734.0,435.0 729.0,438.0 726.5,443.0 726.5,446.8 720.2,449.2 716.5,453.0 715.2,457.5 719.5,460.5 724.0,463.0 726.5,468.0 726.0,474.2 723.5,478.0 715.2,480.0 712.8,478.0 712.8,470.5 713.5,465.5 709.5,461.8 706.0,458.0 706.5,453.0 703.5,450.5 697.0,453.0 692.8,456.8 690.2,454.2 694.0,448.0 690.2,445.5 686.0,449.2 681.0,451.0 678.5,455.5 674.5,456.8 674.0,460.0 678.5,462.5 680.2,466.8 685.2,465.5 689.0,462.5 695.2,465.5 691.5,468.0 685.2,471.8 681.5,478.0 685.2,483.0 687.8,488.0 691.0,493.0 692.8,496.0 693.5,503.5 691.5,511.0 687.8,516.0 684.0,521.0 681.5,526.0 676.5,528.5 671.5,532.2 665.2,536.0 660.2,538.0 659.0,541.0 654.0,540.5 649.0,543.5 642.8,546.0 640.2,549.8 636.5,544.8 631.5,546.0 627.8,544.8 624.0,549.8 620.2,554.8 625.2,561.0 631.5,568.5 635.2,576.0 636.5,584.8 632.8,592.2 626.5,596.0 621.5,601.0 616.5,602.2 615.2,596.0 610.2,592.2 607.0,586.5 601.5,587.2 597.8,581.0 594.0,583.5 592.8,588.5 591.5,596.0 594.0,603.5 599.0,609.8 604.0,613.0 608.5,618.5 611.0,626.0 612.2,633.0 607.8,634.2 602.0,630.5 597.5,622.2 594.5,613.5 590.2,608.5 587.8,602.2 589.0,594.8 587.8,588.5 586.5,578.5 582.8,569.8 580.2,566.0 574.0,571.0 570.2,569.8 571.5,562.2 567.8,557.2 565.2,552.2 562.8,544.8 559.0,538.5 554.0,541.0 546.5,542.2 539.0,544.8 536.5,549.8 527.8,557.2 520.2,563.5 514.0,568.5 507.8,573.5 506.5,582.2 506.0,592.2 504.0,597.2 496.0,606.0 491.5,598.5 487.8,588.5 484.0,578.5 480.2,568.5 476.5,559.8 475.2,551.0 474.0,543.5 469.0,547.2 462.8,544.8 457.8,539.8 461.5,537.2 454.0,533.5 450.7,530.8 439.0,529.2 434.0,526.7 424.0,526.7 417.3,525.8 410.7,525.0 405.7,522.5 402.7,518.0 399.8,519.2 395.7,520.0 390.7,518.3 385.7,515.8 381.5,513.3 378.2,510.0 375.7,505.8 374.0,503.3 369.8,502.5 365.7,503.3 364.8,506.7 366.5,510.8 369.0,514.2 371.5,518.3 374.8,523.3 378.2,528.3 382.3,531.3 385.7,531.7 390.7,530.8 394.0,529.2 398.2,525.0 401.3,521.0 402.3,530.0 405.7,533.3 410.7,535.8 415.7,540.0 412.8,547.2 407.8,552.2 406.5,557.2 399.0,561.0 394.0,564.8 387.8,567.2 379.0,572.2 369.0,577.2 359.0,581.0 350.2,584.0 345.2,585.5 342.8,581.0 341.5,573.5 340.2,566.0 337.8,561.0 334.0,556.0 330.2,551.0 327.8,546.0 324.0,542.2 320.2,537.2 317.8,531.0 314.0,526.0 311.5,519.8 307.8,514.8 306.0,509.0 306.0,508.3 304.0,512.5 301.5,509.2 299.0,506.7 296.5,503.3 294.8,504.2 296.5,508.3 299.0,513.3 302.3,518.3 305.7,525.0 308.2,530.0 310.7,536.7 311.5,544.0 312.0,541.0 316.0,551.0 319.0,562.2 324.0,568.5 331.5,576.0 339.0,584.8 342.8,589.8 349.0,594.8 359.0,594.0 366.5,592.2 374.0,589.0 378.5,590.0 376.5,601.0 369.0,613.5 359.0,627.2 349.0,636.0 340.2,643.5 334.0,649.0 329.0,656.0 325.2,661.0 324.5,668.5 326.5,673.5 326.5,682.0 326.5,696.0 194.0,696.0" fill="none" stroke="#000" stroke-width="1"/>
<g stroke="#000" stroke-width="1">
<polygon points="401.5,154.5 421.5,154.5 413.5,164.0 411.5,169.5 407.0,174.0 404.0,181.5 397.8,179.5 390.2,176.5 389.5,174.0 395.2,170.8 396.5,165.8 400.2,160.8" fill="#ff00ff"/>
<polygon points="386.5,182.0 401.5,182.0 397.8,189.5 396.5,199.5 401.5,208.2 407.0,213.2 405.2,216.5 396.5,215.0 390.2,210.8 387.8,205.8 384.0,204.5 380.2,203.2 379.0,198.2 384.0,195.8 386.5,189.5 383.5,187.0" fill="#ff00ff"/>
<polygon points="411.0,220.8 415.2,216.5 420.2,222.5 416.5,226.5" fill="#ff00ff"/>
<polygon points="364.5,232.0 369.0,227.5 374.5,231.5 369.5,237.0" fill="#ff00ff"/>
<polygon points="382.8,206.5 385.2,205.8 387.0,210.8 384.5,212.0" fill="#ff00ff"/>
<polygon points="461.5,180.0 466.5,177.5 469.0,182.0 462.8,184.0" fill="#ff00ff"/>
<polygon points="646.0,165.8 650.2,163.2 653.5,168.2 649.0,169.5" fill="#ff00ff"/>
<polygon points="637.8,173.2 641.0,170.8 644.5,175.8 639.0,177.0" fill="#ff00ff"/>
<polygon points="762.8,154.5 765.2,160.0 770.2,161.5 774.0,159.0 779.0,159.5 784.0,160.5 789.0,154.5" fill="#ff00ff"/>
<polygon points="804.0,154.5 807.8,160.8 814.0,161.5 819.0,159.0 820.2,154.5" fill="#ff00ff"/>
<polygon points="773.5,167.5 777.8,167.0 778.5,171.5 782.8,172.5 787.0,177.0 788.5,183.2 781.5,182.0 771.5,179.5 775.2,175.8" fill="#ff00ff"/>
<polygon points="879.0,315.8 871.0,317.0 859.0,329.5 851.5,335.8 847.8,343.0 844.0,343.0 842.0,350.5 844.0,360.5 845.2,370.5 846.5,380.5 847.8,384.2 852.8,378.0 854.0,370.5 860.2,368.0 862.8,361.8 867.8,358.0 869.5,353.0 871.0,349.2 879.0,348.0" fill="#ff00ff"/>
<polygon points="840.2,388.0 845.2,386.0 844.0,390.0 841.0,391.0" fill="#ff00ff"/>
<polygon points="781.0,368.0 783.5,361.0 786.5,361.8 785.2,368.0 787.8,375.5 789.0,384.2 791.0,391.8 793.5,398.0 789.0,395.5 786.5,400.5 787.8,408.0 789.0,415.5 785.2,412.5 782.0,415.5 781.5,408.0 782.8,399.2 782.0,388.0 781.5,378.0" fill="#ff00ff"/>
<polygon points="780.2,418.0 784.0,421.0 790.2,425.5 797.8,427.5 796.0,433.0 789.0,435.5 786.5,440.5 782.8,436.8 777.8,438.0 775.2,443.0 771.5,436.8 776.5,433.0 779.0,428.0 779.0,422.5" fill="#ff00ff"/>
<polygon points="774.0,443.0 778.5,441.8 781.0,448.0 781.5,454.2 779.0,460.5 776.5,465.5 777.8,470.5 775.2,475.5 769.0,479.2 764.0,478.0 759.0,480.0 755.2,485.5 751.5,483.0 749.0,480.0 742.8,481.8 736.5,483.5 733.5,485.5 734.0,490.5 735.2,495.5 732.8,498.5 730.2,494.2 729.0,490.5 726.5,486.8 732.8,480.5 740.2,476.8 749.0,473.5 756.5,473.0 759.0,469.2 760.2,464.2 765.2,463.0 769.0,459.2 771.5,453.0 772.8,448.0" fill="#ff00ff"/>
<polygon points="736.5,484.2 741.5,483.0 749.0,481.0 747.8,485.0 742.8,489.2 739.0,487.5" fill="#99d9ea"/>
<polygon points="739.0,484.2 744.0,483.0 747.8,483.5 745.2,488.0 741.5,488.5" fill="#ff00ff"/>
<polygon points="686.5,528.5 690.2,526.0 692.8,528.0 692.0,533.5 690.2,538.5 687.8,542.2 685.2,537.2 684.5,533.0" fill="#ff55ff"/>
<polygon points="634.0,554.8 637.8,552.2 642.8,552.2 643.5,556.0 640.2,559.0 635.2,559.8" fill="#ff00ff"/>
<polygon points="506.5,599.8 510.2,598.5 514.0,604.8 514.5,611.0 511.5,615.5 507.0,614.8 505.2,608.5" fill="#ffc8ff"/>
<polygon points="574.0,617.2 579.0,618.5 587.8,622.2 595.2,629.8 604.0,638.5 612.8,646.0 619.0,652.2 621.5,658.5 620.2,668.5 614.0,669.0 607.0,661.0 600.2,654.8 595.2,647.2 590.2,639.8 584.0,632.2 578.5,624.8" fill="#ffaaff"/>
<polygon points="620.0,670.0 627.0,668.5 636.0,671.0 645.0,672.0 653.0,675.0 660.0,678.0 660.0,681.5 651.0,680.5 640.0,678.0 631.0,676.5 622.0,673.5" fill="#ffaaff"/>
<polygon points="663.0,679.0 672.0,678.5 672.0,683.0 663.0,683.0" fill="#ffaaff"/>
<polygon points="675.0,679.5 684.0,679.0 684.0,683.0 675.0,683.0" fill="#ffaaff"/>
<polygon points="686.0,680.0 697.0,679.5 697.0,683.0 686.0,683.0" fill="#ffaaff"/>
<polygon points="707.0,680.0 716.0,679.0 716.0,683.0 707.0,683.0" fill="#ffffff"/>
<polygon points="651.5,628.5 659.0,623.5 665.2,618.5 670.2,612.2 675.2,613.5 680.2,618.5 676.5,622.2 674.0,628.5 677.8,637.2 672.8,643.5 670.2,649.8 666.5,657.2 664.0,659.8 659.0,656.0 654.0,654.8 649.0,657.2 644.0,653.5 639.0,651.0 637.8,643.5 636.0,636.0 641.5,632.2 649.0,629.8" fill="#ffaaff"/>
<polygon points="683.5,641.0 687.8,638.0 695.2,638.5 702.8,637.2 707.0,634.8 706.0,638.5 700.2,641.0 694.0,641.5 689.0,642.2 687.8,646.0 691.5,648.5 696.5,646.0 700.2,645.5 696.5,649.0 692.8,652.2 695.2,658.5 698.5,664.0 697.0,668.0 694.0,663.5 691.0,658.5 688.5,656.0 686.5,661.0 686.0,667.2 682.0,667.2 681.0,658.5 679.0,654.8 681.5,649.8 683.5,646.0" fill="#ffaaff"/>
<polygon points="686.0,559.8 694.0,558.5 694.5,564.8 691.5,571.0 692.0,577.2 695.2,579.8 700.2,579.8 702.8,582.2 697.8,583.5 691.5,582.2 689.0,586.0 686.5,582.2 685.2,576.0 683.5,569.8 685.2,564.8" fill="#ff99ff"/>
<polygon points="692.8,590.5 697.8,589.0 699.0,594.8 696.5,599.8 693.5,596.0" fill="#ff99ff"/>
<polygon points="702.8,586.0 707.8,586.5 709.5,592.2 706.5,594.8 703.5,591.0" fill="#ff99ff"/>
<polygon points="694.0,607.2 700.2,604.8 705.2,603.0 709.5,598.5 712.8,602.2 713.5,609.8 710.2,613.5 707.8,617.2 703.5,614.8 700.2,611.0 695.2,611.5" fill="#ff99ff"/>
<polygon points="671.0,604.0 677.8,597.2 682.8,592.2 680.2,596.5 675.2,602.2" fill="#000"/>
<polygon points="718.5,632.2 721.5,629.8 722.0,634.8 720.2,639.8 722.8,643.5 721.0,646.0 718.5,642.2 717.8,637.2" fill="#ffaaff"/>
<polygon points="703.5,649.8 711.5,649.8 711.0,651.5 704.0,651.5" fill="#ffaaff"/>
<polygon points="711.0,656.0 715.2,655.2 716.0,658.5 712.0,659.2" fill="#ffaaff"/>
<polygon points="721.0,654.8 729.0,654.8 732.8,658.5 729.0,659.8 722.8,658.0" fill="#ffaaff"/>
<polygon points="732.0,646.0 739.0,643.5 745.2,645.5 747.0,651.0 742.8,653.5 739.0,656.0 741.5,661.0 747.8,658.5 752.8,656.0 759.0,651.0 764.0,649.0 771.5,651.0 777.8,653.5 777.8,686.0 764.0,686.0 767.8,676.0 764.0,668.5 759.0,666.0 754.0,662.2 750.2,658.5 745.2,661.0 740.2,659.8 738.5,653.5 734.5,649.8" fill="#ffaaff"/>
<polygon points="777.8,653.5 786.5,658.5 796.5,662.2 801.5,668.5 806.5,671.0 809.0,677.2 811.5,686.0 777.8,686.0" fill="#ffffff"/>
<polygon points="809.0,668.0 816.5,666.5 824.0,664.0 827.8,661.0 828.5,664.0 824.0,668.5 817.8,670.2 812.8,669.8" fill="#ffffff"/>
<polygon points="821.0,654.0 826.5,656.0 831.0,659.8 832.0,663.0 829.0,660.5 825.2,657.2" fill="#000"/>
<polygon points="839.0,667.2 841.5,668.5 843.5,673.5 841.0,672.2" fill="#ffffff"/>
<polygon points="846.5,671.0 851.5,674.8 851.0,675.5 846.0,671.8" fill="#000"/>
<polygon points="855.2,676.5 861.5,680.5 861.0,681.2 854.8,677.2" fill="#000"/>
<polygon points="746.5,667.2 749.0,666.0 748.5,672.2 746.0,673.5" fill="#000"/>
<polygon points="734.5,674.0 736.5,673.0 735.5,678.0 733.5,678.5" fill="#000"/>
<polygon points="205.7,462.5 212.3,461.3 219.8,460.0 218.2,465.8 216.5,469.2 211.5,465.8 206.5,464.2" fill="#ffaaff"/>
<polygon points="254.8,474.2 257.3,475.0 261.5,476.7 267.0,477.0 261.5,478.0 256.5,477.0" fill="#000"/>
<polygon points="294.8,477.5 299.0,475.8 304.0,474.2 300.7,477.5 297.3,479.7 295.3,479.2" fill="#ffffff"/>
<polygon points="248.7,327.0 252.3,326.3 253.3,330.8 251.5,333.3 249.0,332.5" fill="#ffffff"/>
<polygon points="231.5,336.7 233.7,335.0 234.8,335.8 233.2,341.7 231.5,342.0" fill="#ffffff"/>
<polygon points="562.0,583.5 564.0,582.2 564.0,589.8 562.0,591.0" fill="#000"/>
<polygon points="209.8,358.3 211.5,358.7 212.0,361.7 210.3,361.3" fill="#000"/>
<polygon points="387.8,586.0 394.0,584.8 393.5,586.0 389.0,587.5" fill="#000"/>
<polygon points="582.8,636.0 585.2,635.5 586.5,639.8 584.5,639.0" fill="#000"/>
<polygon points="589.0,646.0 591.5,646.0 592.8,649.8 590.2,649.0" fill="#000"/>
<polygon points="619.0,648.5 622.0,648.0 624.0,653.5 621.5,654.8" fill="#ffffff"/>
<polygon points="629.0,653.5 632.0,653.0 632.0,655.5 629.5,656.0" fill="#ffffff"/>
</g>
<g fill="none" stroke="#9a9a9a" stroke-width="0.8">
<polyline points="637.0,640.0 642.2,636.7 660.0,635.5 664.4,628.9 663.3,622.2"/>
<polyline points="777.8,653.5 777.8,682.0"/>
</g>
<g stroke="#000" stroke-width="1" shape-rendering="auto">
<circle cx="804.5" cy="422.2" r="5.0" fill="#ffc8ff"/>
<circle cx="741.5" cy="460.0" r="5.0" fill="#ffc8ff"/>
<circle cx="702.2" cy="521.0" r="5.0" fill="#ffc8ff"/>
<circle cx="719.5" cy="519.2" r="5.0" fill="#ff00ff"/>
<circle cx="744.5" cy="611.5" r="5.0" fill="#ffc8ff"/>
<circle cx="611.5" cy="636.0" r="5.0" fill="#ffc8ff"/>
<circle cx="376.8" cy="523.8" r="4.5" fill="#ffc8ff"/>
<circle cx="379.0" cy="526.7" r="5.0" fill="#ffc8ff"/>
<circle cx="308.2" cy="484.2" r="5.0" fill="#ffc8ff"/>
<circle cx="307.7" cy="493.3" r="5.0" fill="#ffc8ff"/>
<circle cx="207.3" cy="439.2" r="5.0" fill="#ffc8ff"/>
</g>
</svg>
<div class="abs" style="left:439px;top:507px;width:76px;height:23px;background:#fff;border:1px solid #767676;box-shadow:2px 2px 2px rgba(0,0,0,.35);font-size:14.5px;line-height:21px;padding-left:4px;white-space:nowrap;color:#575757"><span style="letter-spacing:-3px">イラン</span><span class="L" style="margin-left:3px">(35)</span></div>
<!-- scrollbars -->
<div class="abs" style="left:871px;top:157px;width:15px;height:525px;background:#f0f0f0"></div>
<div class="abs" style="left:872px;top:178px;width:14px;height:316px;background:#cdcdcd"></div>
<svg class="abs" style="left:871px;top:157px" width="15" height="21"><path d="M6 13 L10.7 8.3 L15.4 13" fill="none" stroke="#606060" stroke-width="1.7"/></svg>
<svg class="abs" style="left:871px;top:661px" width="15" height="21"><path d="M6 8 L10.7 12.7 L15.4 8" fill="none" stroke="#606060" stroke-width="1.7"/></svg>
<div class="abs" style="left:204px;top:682px;width:682px;height:22px;background:#f0f0f0"></div>
<div class="abs" style="left:298px;top:683px;width:261px;height:19px;background:#a6a6a6"></div>
<svg class="abs" style="left:204px;top:682px" width="20" height="22"><path d="M11.5 6 L7 10.5 L11.5 15" fill="none" stroke="#606060" stroke-width="1.7"/></svg>
<svg class="abs" style="left:851px;top:682px" width="20" height="22"><path d="M7 6 L11.5 10.5 L7 15" fill="none" stroke="#606060" stroke-width="1.7"/></svg>
<!-- status bar -->
<div class="abs" style="left:14px;top:716px;font-size:15px;line-height:20px;white-space:nowrap">最終更新：<span class="L">2016</span>年<span class="L">1</span>月<span class="L">13</span>日<span class="L"> 23:41:44</span></div>
<svg class="abs" style="left:876px;top:722px" width="15" height="15"><g fill="#fff" transform="translate(1,1)"><rect x="10" y="2" width="2" height="2"/><rect x="6" y="6" width="2" height="2"/><rect x="10" y="6" width="2" height="2"/><rect x="2" y="10" width="2" height="2"/><rect x="6" y="10" width="2" height="2"/><rect x="10" y="10" width="2" height="2"/></g><g fill="#959595"><rect x="10" y="2" width="2" height="2"/><rect x="6" y="6" width="2" height="2"/><rect x="10" y="6" width="2" height="2"/><rect x="2" y="10" width="2" height="2"/><rect x="6" y="10" width="2" height="2"/><rect x="10" y="10" width="2" height="2"/></g></svg>
</body></html>
